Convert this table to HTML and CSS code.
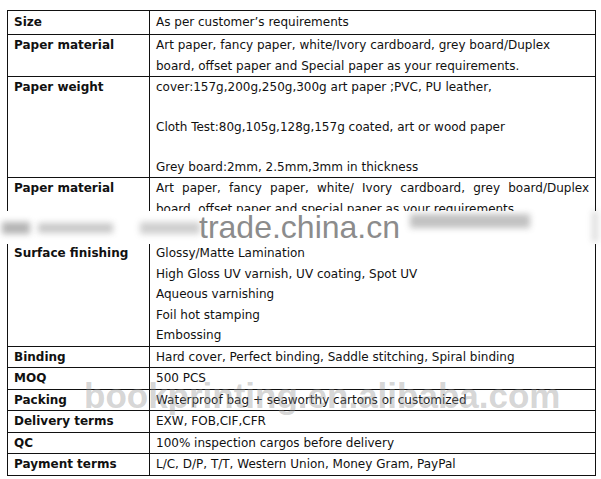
FILE: index.html
```html
<!DOCTYPE html>
<html>
<head>
<meta charset="utf-8">
<link rel="stylesheet" href="styles.css">
</head>
<body>
<div class="page">
<table class="spec">
  <colgroup><col class="c1"><col class="c2"></colgroup>
  <tr class="r-size"><th>Size</th><td>As per customer’s requirements</td></tr>
  <tr><th>Paper material</th><td>Art paper, fancy paper, white/Ivory cardboard, grey board/Duplex board, offset paper and Special paper as your requirements.</td></tr>
  <tr class="r-pw"><th>Paper weight</th><td>cover:157g,200g,250g,300g art paper ;PVC, PU leather,<br><br>Cloth Test:80g,105g,128g,157g coated, art or wood paper<br><br>Grey board:2mm, 2.5mm,3mm in thickness</td></tr>
  <tr class="r-pm2"><th>Paper material</th><td class="just">Art paper, fancy paper, white/ Ivory cardboard, grey board/Duplex board, offset paper and special paper as your requirements</td></tr>
  <tr><th>Surface finishing</th><td>Glossy/Matte Lamination<br>High Gloss UV varnish, UV coating, Spot UV<br>Aqueous varnishing<br>Foil hot stamping<br>Embossing</td></tr>
  <tr><th>Binding</th><td>Hard cover, Perfect binding, Saddle stitching, Spiral binding</td></tr>
  <tr><th>MOQ</th><td>500 PCS</td></tr>
  <tr><th>Packing</th><td>Waterproof bag + seaworthy cartons or customized</td></tr>
  <tr><th>Delivery terms</th><td>EXW, FOB,CIF,CFR</td></tr>
  <tr><th>QC</th><td>100% inspection cargos before delivery</td></tr>
  <tr><th>Payment terms</th><td>L/C, D/P, T/T, Western Union, Money Gram, PayPal</td></tr>
</table>
<div class="band">
  <span class="blob b1"></span><span class="blob b2"></span><span class="blob b3"></span><span class="blob b4"></span><span class="blob b5"></span>
  <span class="wm1">trade.china.cn</span>
</div>
<div class="wm2">bookprinting.en.alibaba.com</div>
</div>
</body>
</html>
```
FILE: styles.css
```css
html, body { margin: 0; padding: 0; background: #fff; }
.page { position: relative; width: 601px; height: 479px; overflow: hidden; }
.spec {
  position: relative;
  top: 10px;
  left: 7px;
  border-collapse: collapse;
  width: 589px;
  table-layout: fixed;
  font-family: "DejaVu Sans", Verdana, sans-serif;
  font-size: 12px;
  line-height: 20.5px;
  color: #111;
}
.c1 { width: 142px; }
.spec th, .spec td {
  border: 1px solid #111;
  padding: 0 6px 0 6px;
  vertical-align: top;
  text-align: left;
}
.spec th { font-weight: bold; }
.r-size th, .r-size td { padding-top: 1px; padding-bottom: 1.5px; }
.r-pw th, .r-pw td { line-height: 20px; }
.spec td.just { text-align: justify; }
.r-pm2 th, .r-pm2 td { padding-bottom: 23px; }
.band {
  position: absolute;
  left: 0; top: 211px;
  width: 601px; height: 33px;
  background: #fff;
}
.blob { position: absolute; background: #777; filter: blur(3px); opacity: 0.55; }
.b1 { left: 2px; top: 11px; width: 28px; height: 12px; }
.b2 { left: 38px; top: 12px; width: 75px; height: 10px; opacity: 0.4; }
.b3 { left: 140px; top: 11px; width: 60px; height: 12px; opacity: 0.35; }
.b4 { left: 410px; top: 3px; width: 120px; height: 14px; opacity: 0.45; }
.b5 { left: 592px; top: 0; width: 6px; height: 31px; opacity: 0.25; }
.wm1 {
  position: absolute;
  left: 199px; top: -2px;
  font-family: "Liberation Sans", Arial, sans-serif;
  font-size: 32px;
  line-height: 36px;
  color: #8c8c8c;
}
.wm2 {
  position: absolute;
  left: 84px; top: 375px;
  font-family: "Liberation Sans", Arial, sans-serif;
  font-size: 35px;
  line-height: 42px;
  font-weight: bold;
  color: rgba(150,150,150,0.4);
  white-space: nowrap;
}
```
